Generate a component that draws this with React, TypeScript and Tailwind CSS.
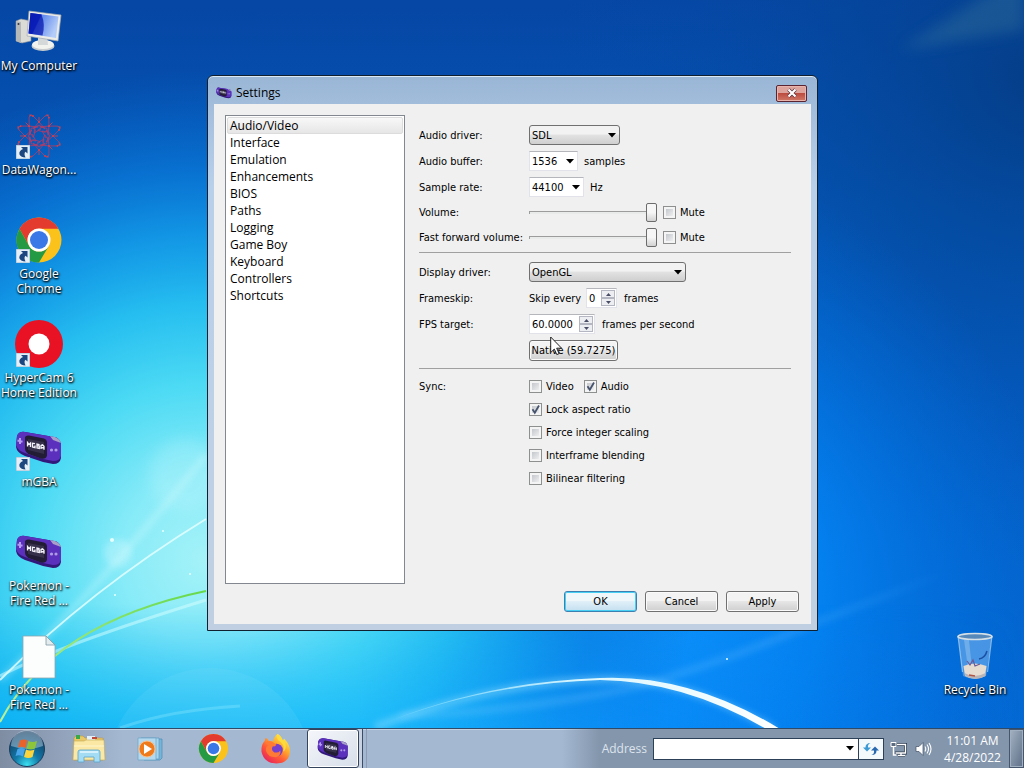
import { ReactNode, useId, useState } from 'react';

const UI = "font-['DejaVu_Sans_Condensed','Noto_Sans',sans-serif] text-[11px] leading-[15px]";
const SHELL = "font-['Open_Sans','Noto_Sans',sans-serif]";

/* ---------- wallpaper ---------- */

function Wallpaper() {
  return (
    <svg
      aria-hidden="true"
      className="absolute inset-0 h-full w-full"
      viewBox="0 0 1024 728"
      preserveAspectRatio="none"
    >
      <defs>
        <linearGradient id="sky" x1="0" y1="0" x2="0" y2="1">
          <stop offset="0" stopColor="#0646a4" />
          <stop offset="0.28" stopColor="#0458b8" />
          <stop offset="0.65" stopColor="#0460c8" />
          <stop offset="1" stopColor="#0468d2" />
        </linearGradient>
        <radialGradient id="glow" gradientUnits="userSpaceOnUse" cx="205" cy="560" r="490">
          <stop offset="0" stopColor="#a4f2f8" />
          <stop offset="0.17" stopColor="#88ebf8" />
          <stop offset="0.36" stopColor="#4cdaf4" />
          <stop offset="0.52" stopColor="#26bef0" />
          <stop offset="0.66" stopColor="#149eea" stopOpacity="0.9" />
          <stop offset="0.8" stopColor="#0a7cdc" stopOpacity="0.7" />
          <stop offset="1" stopColor="#0668cc" stopOpacity="0" />
        </radialGradient>
        <radialGradient id="mid" gradientUnits="userSpaceOnUse" cx="620" cy="590" r="440">
          <stop offset="0" stopColor="#1098ff" />
          <stop offset="0.45" stopColor="#0486f6" stopOpacity="0.85" />
          <stop offset="1" stopColor="#0070e0" stopOpacity="0" />
        </radialGradient>
        <linearGradient id="low" x1="0" y1="0" x2="1" y2="0">
          <stop offset="0" stopColor="#08b0f4" />
          <stop offset="0.35" stopColor="#18b8fc" />
          <stop offset="0.6" stopColor="#0c94fc" stopOpacity="0.8" />
          <stop offset="0.9" stopColor="#0478ec" stopOpacity="0.3" />
          <stop offset="1" stopColor="#0468d8" stopOpacity="0" />
        </linearGradient>
        <linearGradient id="fade" x1="0" y1="0" x2="0" y2="1">
          <stop offset="0.83" stopColor="#000" />
          <stop offset="1" stopColor="#ccc" />
        </linearGradient>
        <mask id="bottom">
          <rect width="1024" height="728" fill="url(#fade)" />
        </mask>
        <radialGradient id="corner" gradientUnits="userSpaceOnUse" cx="1040" cy="80" r="480">
          <stop offset="0" stopColor="#043c84" stopOpacity="0.9" />
          <stop offset="1" stopColor="#0450b0" stopOpacity="0" />
        </radialGradient>
        <linearGradient id="arc" gradientUnits="userSpaceOnUse" x1="370" y1="0" x2="780" y2="0">
          <stop offset="0" stopColor="#8fe4ff" stopOpacity="0.3" />
          <stop offset="0.5" stopColor="#d8f6ff" />
          <stop offset="1" stopColor="#ffffff" />
        </linearGradient>
        <linearGradient id="green" gradientUnits="userSpaceOnUse" x1="0" y1="720" x2="210" y2="590">
          <stop offset="0" stopColor="#b8f09a" />
          <stop offset="1" stopColor="#64d848" />
        </linearGradient>
        <linearGradient id="ray" gradientUnits="userSpaceOnUse" x1="400" y1="0" x2="950" y2="0">
          <stop offset="0" stopColor="#7fd0ff" />
          <stop offset="0.7" stopColor="#60b8ff" />
          <stop offset="1" stopColor="#60b8ff" stopOpacity="0" />
        </linearGradient>
        <filter id="soft" x="-10%" y="-50%" width="120%" height="200%">
          <feGaussianBlur stdDeviation="3" />
        </filter>
        <filter id="haze" x="-30%" y="-30%" width="160%" height="160%">
          <feGaussianBlur stdDeviation="7" />
        </filter>
      </defs>
      <rect width="1024" height="728" fill="url(#sky)" />
      <rect width="1024" height="728" fill="url(#corner)" />
      <rect width="1024" height="728" fill="url(#mid)" />
      <rect width="1024" height="728" fill="url(#glow)" />
      <rect width="1024" height="728" fill="url(#low)" mask="url(#bottom)" />
      <path d="M900 50L1024 -30V30z" fill="#3c7c9c" opacity="0.35" filter="url(#haze)" />
      <circle cx="185" cy="475" r="36" fill="#d8fbff" opacity="0.22" filter="url(#haze)" />
      <circle cx="118" cy="553" r="14" fill="#d8fbff" opacity="0.35" filter="url(#soft)" />
      <circle cx="210" cy="770" r="102" fill="#a8f0ff" opacity="0.1" />
      <path d="M0 680 Q90 600 206 455" fill="none" stroke="#e8ffff" strokeWidth="6" opacity="0.28" filter="url(#soft)" />
      <path d="M0 680 Q90 590 206 519" fill="none" stroke="#e8ffff" strokeWidth="2" opacity="0.8" />
      <path d="M0 676 Q60 645 206 600" fill="none" stroke="#d8ffff" strokeWidth="3" opacity="0.5" />
      <path d="M0 722 C30 665 90 615 206 591" fill="none" stroke="url(#green)" strokeWidth="2" />
      <path d="M120 728 Q170 710 240 706" fill="none" stroke="#9cf0ff" strokeWidth="3" opacity="0.3" />
      <path d="M400 716 Q520 712 640 686 Q740 656 817 622 L940 575" fill="none" stroke="url(#ray)" strokeWidth="8" opacity="0.25" filter="url(#soft)" />
      <path d="M375 727 Q500 680 610 679 Q690 680 775 730" fill="none" stroke="#9fe2ff" strokeWidth="8" opacity="0.4" filter="url(#soft)" />
      <path
        d="M375 727 Q480 682 600 678 Q690 674 780 729 L768 730 Q685 681 600 680 Q480 684 375 727Z"
        fill="url(#arc)"
      />
      <g fill="#e8ffff">
        <circle cx="112" cy="540" r="2" />
        <circle cx="163" cy="531" r="1" />
        <circle cx="190" cy="574" r="1" />
        <circle cx="727" cy="659" r="1" />
        <circle cx="115" cy="595" r="1" />
      </g>
    </svg>
  );
}

/* ---------- icons ---------- */

function ComputerIcon() {
  return (
    <svg viewBox="0 0 48 48" className="size-12" aria-hidden="true">
      <defs>
        <linearGradient id="scr" x1="0" y1="0" x2="1" y2="0.4">
          <stop offset="0" stopColor="#0a1eb4" />
          <stop offset="0.38" stopColor="#1030d0" />
          <stop offset="0.42" stopColor="#5c86ea" />
          <stop offset="1" stopColor="#b4ccf8" />
        </linearGradient>
      </defs>
      <path d="M1 13l5-2 10 2v20l-9 2-6-2z" fill="#dcdcd6" stroke="#8c9098" strokeWidth=".6" />
      <path d="M1 13l5 1v21l-5-2z" fill="#b4b8b8" />
      <circle cx="3.500" cy="16" r="1" fill="#334" />
      <ellipse cx="28" cy="38" rx="11.500" ry="5" fill="#c8ccce" />
      <ellipse cx="28" cy="36.500" rx="11" ry="4.500" fill="#f2f2ee" />
      <path d="M23 28h9l1 9h-10z" fill="#d4d8d8" />
      <path d="M14 3l32 4-3 26-31-5z" fill="#ecece8" stroke="#a0a8b0" strokeWidth=".7" />
      <path d="M15.500 5L43.500 8.500 41 30 13.500 25.500z" fill="url(#scr)" />
      <path d="M15.500 5l11 1.500q4 10 1 21L13.500 25.500z" fill="#0818b0" opacity=".75" />
    </svg>
  );
}

function DataWagonIcon() {
  const ring = Array.from({ length: 8 }, (_, i) => i * 45);
  return (
    <svg viewBox="0 0 48 48" className="size-12" aria-hidden="true">
      <g fill="none" stroke="#b03c68" strokeWidth=".8">
        {ring.map((a) => (
          <g key={a} transform={`rotate(${a} 24 24)`}>
            <path d="M18 4l6 6 6-6M24 10l-6 7M24 10l6 7M18 17l6-4 6 4M20 15l-1 6 7-4" />
            <path d="M14 3l4 1M30 4l4-1M24 5v5" stroke="#d8404c" />
            <circle cx="18" cy="4" r=".9" fill="#d8404c" stroke="none" />
            <circle cx="24" cy="10" r=".9" fill="#d8404c" stroke="none" />
          </g>
        ))}
      </g>
    </svg>
  );
}

function ChromeIcon({ className }: { className: string }) {
  return (
    <svg viewBox="0 0 48 48" className={className} aria-hidden="true">
      <circle cx="24" cy="24" r="22.500" fill="#fbc21c" />
      <path d="M24 1.500A22.500 22.500 0 0 1 43.500 12.700H24A11.500 11.500 0 0 0 14 29.700L4.500 12.700A22.500 22.500 0 0 1 24 1.500z" fill="#e33b2e" />
      <path d="M4.500 12.700L14 29.700A11.500 11.500 0 0 0 34 29.700L24 46.500A22.500 22.500 0 0 1 4.500 12.700z" fill="#249a44" />
      <circle cx="24" cy="24" r="11.500" fill="#fff" />
      <circle cx="24" cy="24" r="9" fill="#3b78e7" />
    </svg>
  );
}

function HyperCamIcon() {
  return (
    <svg viewBox="0 0 48 48" className="size-12" aria-hidden="true">
      <circle cx="24" cy="24" r="24" fill="#e81224" />
      <circle cx="24" cy="24" r="10.500" fill="#fff" />
    </svg>
  );
}

function GbaIcon({ className }: { className: string }) {
  return (
    <svg viewBox="0 0 48 48" className={className} aria-hidden="true">
      <path d="M2 12Q4 7 10 8L39 13Q45 14 46 20V34Q45 40 38 40L28 38 10 32Q2 29 1 23z" fill="#33187c" />
      <path d="M2 12Q4 7 10 8L39 13Q45 14 46 20V32Q45 37 38 37L28 35 10 29Q2 26 1 21z" fill="#5a30bc" />
      <path d="M35 12l5 1q5 2 6 6l-8-3z" fill="#a8a0c8" />
      <path d="M10 13q1-2 4-1.500l15 3q3 1 3 4v13q-1 4-6 3l-11-4q-5-2-5-6z" fill="#221c34" />
      <path d="M13 15l16 3v12l-16-4z" fill="#36304a" />
      <g fill="none" stroke="#f4f2fa" strokeWidth="1.300">
        <path d="M12.500 22.500v-4l1.500 2 1.500-1.500v4" />
        <path d="M20 19.700l-2.500-.5v3.800l2.500.6v-2" />
        <path d="M22 24v-4l2 .5v1.500l-2-.3 2.300.5v2.300z" />
        <path d="M26 25v-3.500l1.500-.8 1.500 1.500v3.600M26 23.500l3 .5" />
      </g>
      <path d="M5 14v6M2.500 16.500l5 1.200" stroke="#b49cf0" strokeWidth="2" />
      <circle cx="36.500" cy="26" r="1.600" fill="#b09ce4" />
      <circle cx="41" cy="26" r="1.600" fill="#b09ce4" />
    </svg>
  );
}

function FileIcon() {
  return (
    <svg viewBox="0 0 48 48" className="size-12" aria-hidden="true">
      <path d="M8 4h23l9 9v33H8z" fill="#fcfdfd" stroke="#8ea6ae" strokeWidth=".8" />
      <path d="M31 4l9 9h-9z" fill="#e4ecee" stroke="#7e9aa4" strokeWidth=".8" />
    </svg>
  );
}

function BinIcon() {
  return (
    <svg viewBox="0 0 48 48" className="size-12" aria-hidden="true">
      <path d="M7 4L12 44Q24 50 35 44L41 4z" fill="#8cc0f4" opacity=".5" />
      <path d="M7 4l4.500 36M41 4l-4.500 36" stroke="#cfe4f6" strokeWidth="1.200" opacity=".6" />
      <path d="M13 8l4 28h4L18 8z" fill="#e4f2fc" opacity=".25" />
      <ellipse cx="24" cy="4.500" rx="17" ry="3" fill="#5688ba" stroke="#d4e0e6" strokeWidth="1.600" />
      <path d="M12.500 34q11-5 23 0l-1.500 10q-10 5-20 0z" fill="#e6dccf" />
      <path d="M16 29l3 4 3-5 2 6 5-2" stroke="#6c5a98" strokeWidth="1.200" fill="none" />
      <path d="M13.500 41q10 6 21 0v3q-10 6-20 0z" fill="#b8b4b8" />
      <path d="M18 43l6 1" stroke="#b05848" strokeWidth="1.500" />
      <path d="M28 27q6-1 8-8" stroke="#1c50a4" strokeWidth="1.500" fill="none" />
    </svg>
  );
}

function ShortcutArrow() {
  return (
    <svg viewBox="0 0 14 14" className="absolute bottom-px left-px size-3.5" aria-hidden="true">
      <rect width="14" height="14" fill="#e4eff8" stroke="#9db8cc" />
      <path d="M5 2h6.500v6.500L9.500 6.800Q7.500 8.500 9.500 12.500 5 12.500 3.500 9.500 2.500 6 7 4z" fill="#1c4680" />
    </svg>
  );
}

function StartOrb() {
  return (
    <svg viewBox="0 0 38 38" className="size-[38px]" aria-hidden="true">
      <defs>
        <radialGradient id="orb" cx="0.5" cy="0.95" r="0.9">
          <stop offset="0" stopColor="#3ce0f0" />
          <stop offset="0.4" stopColor="#1278a8" />
          <stop offset="1" stopColor="#123a5c" />
        </radialGradient>
      </defs>
      <circle cx="19" cy="19" r="17.500" fill="url(#orb)" stroke="#1c3c5c" />
      <path d="M3 16A16 16 0 0 1 35 16Q20 22 3 16z" fill="#c8dcea" opacity=".45" />
      <path d="M12 10.500q4-2 7.500 0l-2 7.500q-4-2-7.500-.5z" fill="#e8622c" />
      <path d="M20.500 11q4 2 8.500 0l-2 7.500q-4 2-8.500 0z" fill="#8cc43c" />
      <path d="M9.500 19q4-2 7.500 0l-2 7.500q-4-2-7.500-.5z" fill="#48a4e8" />
      <path d="M18 19.500q4 2 8.500 0l-2 7.500q-4 2-8.500 0z" fill="#fcd43c" />
    </svg>
  );
}

function FolderIcon() {
  return (
    <svg viewBox="0 0 34 30" className="h-[30px] w-[34px]" aria-hidden="true">
      <path d="M2 4l2-2h7l2 2h18v22H2z" fill="#e8c868" stroke="#b89848" strokeWidth=".6" />
      <path d="M4 1h4v4H4z" fill="#38a848" />
      <path d="M15 2h8v4h-8z" fill="#e4f0f8" />
      <path d="M20 3h5v2h-5z" fill="#c04838" />
      <path d="M2 7h10l2-1h18l1 20H1z" fill="#fae8a4" stroke="#c8a858" strokeWidth=".6" />
      <path d="M2 12h30" stroke="#fff6d0" />
      <path d="M6 28V18q0-2 2-2h18q2 0 2 2v10h-6v-5H12v5z" fill="#a4dcf4" stroke="#58a4cc" strokeWidth=".8" />
      <path d="M8 18h18" stroke="#e8f8ff" strokeWidth="1.500" />
    </svg>
  );
}

function MediaIcon() {
  return (
    <svg viewBox="0 0 30 28" className="h-7 w-[30px]" aria-hidden="true">
      <path d="M7 4h19v19l-2 2H8z" fill="#78b4d8" stroke="#4c8cb8" strokeWidth=".7" />
      <path d="M5 3h18v21H5z" fill="#a8d4ec" stroke="#5c98c0" strokeWidth=".7" />
      <path d="M2 3h18v22H2z" fill="#b4d8ee" stroke="#6ca4c4" strokeWidth=".7" />
      <circle cx="11" cy="14" r="8" fill="#ee7a1c" stroke="#fbc08a" />
      <path d="M8 9l8 5-8 5z" fill="#fff" />
    </svg>
  );
}

function FirefoxIcon() {
  return (
    <svg viewBox="0 0 32 32" className="size-[31px]" aria-hidden="true">
      <defs>
        <linearGradient id="fox" x1="0.85" y1="0.1" x2="0.2" y2="0.95">
          <stop offset="0" stopColor="#fff04a" />
          <stop offset="0.35" stopColor="#ffa82c" />
          <stop offset="0.65" stopColor="#ff5a38" />
          <stop offset="1" stopColor="#e8245c" />
        </linearGradient>
      </defs>
      <path
        d="M18 1q4 2 5 6 2 0 2-1 6 6 6 13-1 12-14 12.500Q4 31 1.500 19q-.5-7 3.500-11 0-2 1-3 2 1 3 3 2 0 4 1 2-6 5-8z"
        fill="url(#fox)"
      />
      <circle cx="17" cy="17.500" r="6.500" fill="#7440d0" />
      <path d="M5 10q5-3 9 0l3 2q-1 2-4 2-2 4 2 6 4 1 6-2 1 6-5 7-8 0-10-7 0-5 3-5z" fill="#ff7a34" />
      <path d="M18 1q-2 5 3 8 5 4 3 10 4-2 2-9-1-3-3-3-1-4-5-6z" fill="#ffdc3c" />
    </svg>
  );
}

function Caret() {
  return (
    <svg viewBox="0 0 8 5" className="h-[5px] w-2" aria-hidden="true">
      <path d="M0 0h8L4 4.500z" fill="#000" />
    </svg>
  );
}

/* ---------- form controls ---------- */

function Picker({ id, options, width, editable }: { id: string; options: string[]; width: string; editable?: boolean }) {
  const look = editable
    ? 'border-[#e2e3ea] border-t-[#b4b6bc] bg-white'
    : 'rounded-[3px] border-[#707070] bg-linear-to-b from-[#f2f2f2] from-45% via-[#e2e2e2] via-50% to-[#cfcfcf]';
  return (
    <span className={`relative inline-flex items-center ${width}`}>
      <select id={id} className={`h-5 w-full appearance-none border pl-[2px] outline-none ${look}`}>
        {options.map((o) => (
          <option key={o}>{o}</option>
        ))}
      </select>
      <span className="pointer-events-none absolute right-1">
        <Caret />
      </span>
    </span>
  );
}

function Check({ label, on }: { label: string; on?: boolean }) {
  const [checked, setChecked] = useState(!!on);
  return (
    <label className="flex items-center gap-1">
      <span className="relative flex size-[13px]">
        <input
          type="checkbox"
          checked={checked}
          onChange={(e) => setChecked(e.target.checked)}
          className="size-[13px] appearance-none border border-[#8e8f8f] bg-linear-to-br from-[#b8bcc2] to-[#fafafa] shadow-[inset_0_0_0_2px_#f4f4f4]"
        />
        {checked && (
          <svg viewBox="0 0 13 13" className="pointer-events-none absolute inset-0" aria-hidden="true">
            <path d="M3.500 6.200l2.300 3.600L10 2.500" fill="none" stroke="#46536e" strokeWidth="1.800" />
          </svg>
        )}
      </span>
      {label}
    </label>
  );
}

function Volume({ id }: { id: string }) {
  return (
    <div className="flex items-center gap-1.5">
      <input
        id={id}
        type="range"
        defaultValue={100}
        className="h-[19px] w-32 appearance-none bg-transparent [&::-webkit-slider-runnable-track]:h-[3px] [&::-webkit-slider-runnable-track]:border-t [&::-webkit-slider-runnable-track]:border-l [&::-webkit-slider-runnable-track]:border-[#9c9c9c] [&::-webkit-slider-runnable-track]:bg-[#e9eaea] [&::-webkit-slider-thumb]:mt-[-9px] [&::-webkit-slider-thumb]:h-[19px] [&::-webkit-slider-thumb]:w-[11px] [&::-webkit-slider-thumb]:appearance-none [&::-webkit-slider-thumb]:rounded-[2px] [&::-webkit-slider-thumb]:border [&::-webkit-slider-thumb]:border-[#6c6c6c] [&::-webkit-slider-thumb]:bg-linear-to-b [&::-webkit-slider-thumb]:from-[#f6f6f6] [&::-webkit-slider-thumb]:from-50% [&::-webkit-slider-thumb]:to-[#d2d2d2]"
      />
      <Check label="Mute" />
    </div>
  );
}

function Spinner({ id, initial, width, digits }: { id: string; initial: number; width: string; digits: number }) {
  const [value, setValue] = useState(initial);
  const step = 'flex h-2 w-[14px] items-center justify-center border border-[#b4b7c2] bg-[#eceef2]';
  return (
    <span className={`flex h-5 items-center border border-[#e2e3ea] border-t-[#b4b6bc] bg-white pr-px ${width}`}>
      <input
        id={id}
        value={value.toFixed(digits)}
        onChange={(e) => setValue(Number(e.target.value) || 0)}
        className="min-w-0 flex-1 bg-transparent pl-[2px] outline-none"
      />
      <span className="flex flex-col">
        <button type="button" aria-label="Increase" className={step} onClick={() => setValue(value + 1)}>
          <svg viewBox="0 0 5 3" className="h-[3px] w-[5px]">
            <path d="M0 3h5L2.500 0z" fill="#484c64" />
          </svg>
        </button>
        <button type="button" aria-label="Decrease" className={step} onClick={() => setValue(Math.max(0, value - 1))}>
          <svg viewBox="0 0 5 3" className="h-[3px] w-[5px]">
            <path d="M0 0h5L2.500 3z" fill="#484c64" />
          </svg>
        </button>
      </span>
    </span>
  );
}

function Row({ label, htmlFor, height = 'h-[26px]', children }: { label?: string; htmlFor?: string; height?: string; children: ReactNode }) {
  return (
    <div className={`flex items-center ${height}`}>
      <div className="w-[110px] shrink-0 whitespace-nowrap">
        {label && (htmlFor ? <label htmlFor={htmlFor}>{label}</label> : label)}
      </div>
      {children}
    </div>
  );
}

const BUTTON =
  'h-[21px] rounded-[3px] border border-[#707070] bg-linear-to-b from-[#f3f3f3] from-45% via-[#e6e6e6] via-50% to-[#cfcfcf] shadow-[inset_0_0_0_1px_#fafafa]';

const SECTIONS = [
  'Audio/Video', 'Interface', 'Emulation', 'Enhancements', 'BIOS', 'Paths',
  'Logging', 'Game Boy', 'Keyboard', 'Controllers', 'Shortcuts',
];

function SettingsWindow() {
  const id = useId();
  const [section, setSection] = useState('Audio/Video');
  return (
    <section
      aria-label="Settings"
      className="absolute top-[75px] left-[207px] w-[611px] rounded-t-md border border-[#10202e] bg-linear-to-b from-[#9ab6d6] from-0% via-[#b9d0ea] via-20% to-[#c0d0e2] px-1.5 pb-1.5 shadow-[inset_0_1px_0_#dceaf6]"
    >
      <header className={`flex h-7 items-center gap-1 pt-1.5 pr-1 pl-0.5 text-[12px] leading-4 ${SHELL}`}>
        <GbaIcon className="size-4" />
        <h1 className="flex-1">Settings</h1>
        <button
          type="button"
          aria-label="Close"
          className="flex h-[17px] w-[31px] items-center justify-center rounded-[2px] border border-[#5a2430] bg-linear-to-b from-[#dca49c] from-45% via-[#bc4c40] via-50% to-[#d07868] shadow-[inset_0_0_0_1px_#e8b4ac]"
        >
          <svg viewBox="0 0 12 10" className="h-2.5 w-3">
            <path d="M2.500 1.500l7 7M9.500 1.500l-7 7" stroke="#5a3038" strokeWidth="3.600" />
            <path d="M2.500 1.500l7 7M9.500 1.500l-7 7" stroke="#fff" strokeWidth="2.200" />
          </svg>
        </button>
      </header>
      <div className={`bg-[#f0f0f0] pt-[11px] pr-3 pb-3 pl-[11px] text-black ${UI}`}>
        <div className="flex gap-3.5">
          <ul className={`min-h-[469px] w-[180px] border border-[#828790] bg-white p-px text-[12px] leading-[15px] ${SHELL}`}>
            {SECTIONS.map((s) => (
              <li key={s}>
                <button
                  type="button"
                  onClick={() => setSection(s)}
                  className={`flex h-[17px] w-full items-center rounded-[2px] border px-[2px] ${
                    s === section ? 'border-[#dcdcdc] bg-linear-to-b from-[#f8f8f8] to-[#e6e6e6]' : 'border-transparent'
                  }`}
                >
                  {s}
                </button>
              </li>
            ))}
          </ul>
          <form className="flex-1 pt-[7px] pr-2" onSubmit={(e) => e.preventDefault()}>
            <Row label="Audio driver:" htmlFor={`${id}a`}>
              <Picker id={`${id}a`} options={['SDL', 'Qt Multimedia']} width="w-[91px]" />
            </Row>
            <Row label="Audio buffer:" htmlFor={`${id}b`}>
              <Picker id={`${id}b`} options={['1536', '2048', '4096']} width="w-[49px]" editable />
              <span className="pl-1.5">samples</span>
            </Row>
            <Row label="Sample rate:" htmlFor={`${id}c`}>
              <Picker id={`${id}c`} options={['44100', '48000']} width="w-[55px]" editable />
              <span className="pl-1.5">Hz</span>
            </Row>
            <Row label="Volume:" htmlFor={`${id}d`} height="h-[25px]">
              <Volume id={`${id}d`} />
            </Row>
            <Row label="Fast forward volume:" htmlFor={`${id}e`} height="h-[25px]">
              <Volume id={`${id}e`} />
            </Row>
            <hr className="mt-0.5 mb-1.5 border-[#a0a0a0]" />
            <Row label="Display driver:" htmlFor={`${id}f`}>
              <Picker id={`${id}f`} options={['OpenGL', 'Software']} width="w-[157px]" />
            </Row>
            <Row label="Frameskip:" htmlFor={`${id}g`}>
              <span className="w-[57px]">Skip every</span>
              <Spinner id={`${id}g`} initial={0} digits={0} width="w-[31px]" />
              <span className="pl-[7px]">frames</span>
            </Row>
            <Row label="FPS target:" htmlFor={`${id}h`}>
              <Spinner id={`${id}h`} initial={60} digits={4} width="w-[66px]" />
              <span className="pl-[7px]">frames per second</span>
            </Row>
            <Row height="h-[27px]">
              <button type="button" className={`w-[89px] whitespace-nowrap ${BUTTON}`}>
                Native (59.7275)
              </button>
            </Row>
            <hr className="mt-1 mb-1.5 border-[#a0a0a0]" />
            <Row label="Sync:" height="h-[23px]">
              <div className="flex gap-2.5">
                <Check label="Video" />
                <Check label="Audio" on />
              </div>
            </Row>
            <Row height="h-[23px]"><Check label="Lock aspect ratio" on /></Row>
            <Row height="h-[23px]"><Check label="Force integer scaling" /></Row>
            <Row height="h-[23px]"><Check label="Interframe blending" /></Row>
            <Row height="h-[23px]"><Check label="Bilinear filtering" /></Row>
          </form>
        </div>
        <footer className="mt-[7px] flex justify-end gap-2">
          <button
            type="button"
            className="h-[21px] w-[73px] rounded-[3px] border border-[#3c7fb1] bg-linear-to-b from-[#f0f7fb] from-45% via-[#e0eff8] via-50% to-[#c4e0f0] shadow-[inset_0_0_0_1px_#48d0f4]"
          >
            OK
          </button>
          <button type="button" className={`w-[73px] ${BUTTON}`}>Cancel</button>
          <button type="button" className={`w-[73px] ${BUTTON}`}>Apply</button>
        </footer>
      </div>
    </section>
  );
}

function DesktopItem({ icon, lines, shortcut }: { icon: ReactNode; lines: string[]; shortcut?: boolean }) {
  return (
    <a
      href="#"
      className={`flex h-[104px] w-[78px] flex-col items-center pt-2 text-center text-[12px] leading-[15px] whitespace-nowrap text-white [text-shadow:1px_1px_2px_#000,0_1px_2px_#000] ${SHELL}`}
    >
      <span className="relative mb-0.5">
        {icon}
        {shortcut && <ShortcutArrow />}
      </span>
      {lines.map((l) => (
        <span key={l}>{l}</span>
      ))}
    </a>
  );
}

function Taskbar() {
  const app = 'flex h-10 w-[62px] items-center justify-center';
  return (
    <nav
      aria-label="Taskbar"
      className={`relative flex h-10 items-center border-t border-[#2f4a68] bg-linear-to-r from-[#7f8da3] from-0% via-[#a4b8d2] via-12% to-[#a4b8d2] to-54% shadow-[inset_0_1px_0_#c4d2e2] ${SHELL}`}
    >
      <button type="button" aria-label="Start" className="flex w-[54px] justify-center">
        <StartOrb />
      </button>
      <div className="flex flex-1 items-center pl-1">
        <button type="button" aria-label="Explorer" className={app}><FolderIcon /></button>
        <button type="button" aria-label="Media player" className={app}><MediaIcon /></button>
        <button type="button" aria-label="Chrome" className={app}><ChromeIcon className="size-[31px]" /></button>
        <button type="button" aria-label="Firefox" className={app}><FirefoxIcon /></button>
        <div className="ml-px flex h-[39px] border-r border-[#8c9cb4] pr-[3px]">
          <div className="flex border-r border-[#3c4c64] bg-[#c8d2e0] pr-[3px]">
            <button
              type="button"
              aria-label="mGBA"
              className="flex h-[39px] w-[52px] items-center justify-center rounded-[3px] border border-[#34445c] bg-linear-to-br from-[#f4f6fa] to-[#d8dfea] shadow-[inset_0_0_0_1px_#fff]"
            >
              <GbaIcon className="size-8" />
            </button>
          </div>
        </div>
      </div>
      <div className="flex h-[39px] items-center bg-linear-to-r from-transparent from-0% via-[#8496ac] via-8% to-[#8496ac] pl-10">
        <label htmlFor="address" className="pr-1.5 text-[12px] text-[#dde4ec]">Address</label>
        <div className="flex h-[22px] border border-[#2c4058] bg-white">
          <input id="address" className="w-[192px] px-1 outline-none" />
          <button type="button" aria-label="Show addresses" className="flex w-3 items-center"><Caret /></button>
          <button type="button" aria-label="Go" className="flex w-[25px] items-center justify-center border-l border-[#2c4058] bg-[#f4f9fc]">
            <svg viewBox="0 0 16 14" className="h-3.5 w-4">
              <path d="M7.500 1Q4.500 2 5 5.500H8L4 9.500 0 5.500h2.500Q2.500 1 7.500 1z" fill="#3c9ad4" />
              <path d="M8.500 13q3-1 2.500-4.500H8l4-4 4 4h-2.500Q13.500 13 8.500 13z" fill="#2868b0" />
            </svg>
          </button>
        </div>
        <div className="flex items-center gap-2 pl-1.5">
          <svg viewBox="0 0 17 16" className="h-4 w-[17px]" aria-label="Network">
            <path d="M4 3.500h11.500v8.500H5M8 14.500h7M11 12v2" fill="none" stroke="#2c3c50" strokeWidth="3" />
            <path d="M7 3.500h8.500v8.500H5.500M8 14.500h7M11 12v2M3.500 6v8h3" fill="none" stroke="#fff" strokeWidth="1.400" />
            <path d="M1 1.500h5v4H1z" fill="#5c6c80" stroke="#fff" />
          </svg>
          <svg viewBox="0 0 17 16" className="h-4 w-[17px]" aria-label="Sound">
            <path d="M1 5.500h3l4-4v13l-4-4H1z" fill="#fff" stroke="#405064" strokeWidth=".7" />
            <path d="M10 5.500q1.500 2.500 0 5M12 3.500q3 4.500 0 9M14 2q4 6 0 12" fill="none" stroke="#fff" strokeWidth="1.100" />
          </svg>
        </div>
        <div className="w-[77px] pl-1 text-center text-[12px] leading-[17px] text-white">
          <div>11:01 AM</div>
          <div>4/28/2022</div>
        </div>
        <button
          type="button"
          aria-label="Show desktop"
          className="h-[39px] w-[15px] border border-[#46566c] bg-linear-to-br from-[#a4b2c2] to-[#5e7088] shadow-[inset_0_0_0_1px_#a0b0c0]"
        />
      </div>
    </nav>
  );
}

export default function App() {
  return (
    <div className="flex min-h-screen flex-col overflow-hidden bg-[#0460c6]">
      <main className="relative min-h-[728px] flex-1">
        <Wallpaper />
        <div className="relative flex w-[78px] flex-col">
          <DesktopItem icon={<ComputerIcon />} lines={['My Computer']} />
          <DesktopItem icon={<DataWagonIcon />} lines={['DataWagon...']} shortcut />
          <DesktopItem icon={<ChromeIcon className="size-12" />} lines={['Google', 'Chrome']} shortcut />
          <DesktopItem icon={<HyperCamIcon />} lines={['HyperCam 6', 'Home Edition']} shortcut />
          <DesktopItem icon={<GbaIcon className="size-12" />} lines={['mGBA']} shortcut />
          <DesktopItem icon={<GbaIcon className="size-12" />} lines={['Pokemon -', 'Fire Red ...']} />
          <DesktopItem icon={<FileIcon />} lines={['Pokemon -', 'Fire Red ...']} />
        </div>
        <div className="absolute right-2.5 bottom-0">
          <DesktopItem icon={<BinIcon />} lines={['Recycle Bin']} />
        </div>
        <SettingsWindow />
        <svg viewBox="0 0 13 20" className="pointer-events-none absolute top-[336px] left-[550px] h-5 w-[13px]" aria-hidden="true">
          <path d="M.7 1v15.500l3.600-3.400 2.500 5.500 2.300-1-2.400-5.400h4.900z" fill="#fff" stroke="#222" />
        </svg>
      </main>
      <Taskbar />
    </div>
  );
}
